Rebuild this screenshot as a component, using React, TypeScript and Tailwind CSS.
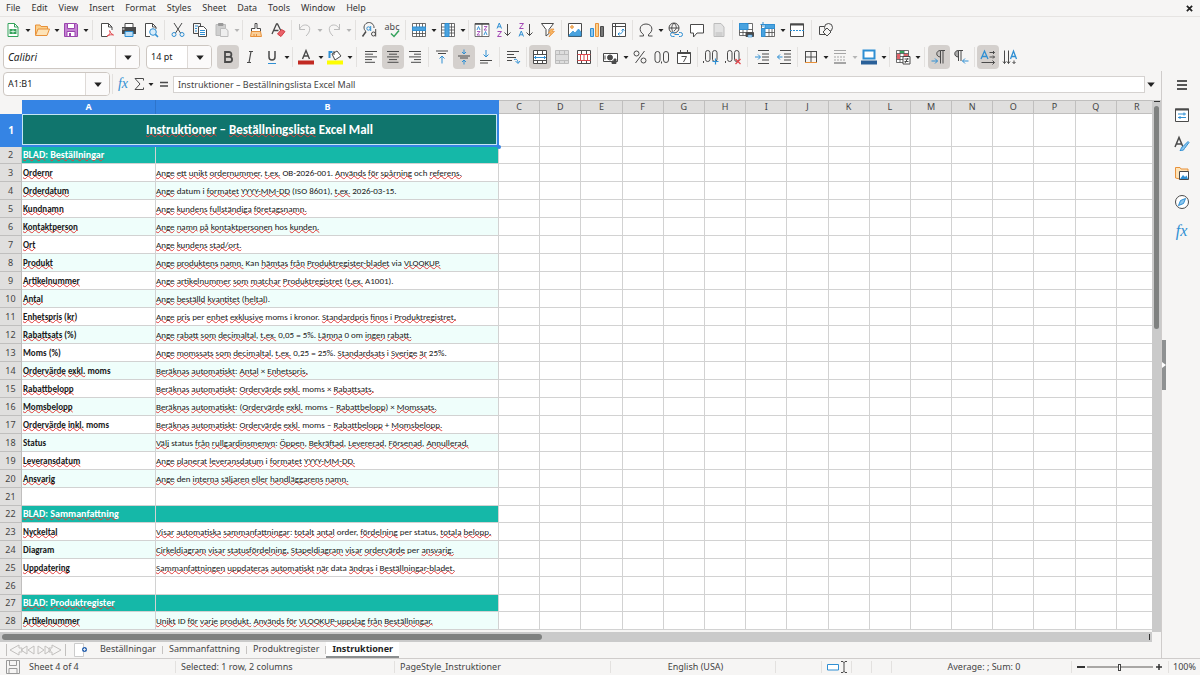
import { ReactNode, useState } from "react";
import clsx from "clsx";

const INK = "#4a4a4a";
const BLUE = "#2f8fd3";
const ORANGE = "#e8913a";
const GREEN = "#35a35c";
const PALE = "#bcbcbc";

function Svg({ children, className }: { children: ReactNode; className?: string }) {
  return (
    <svg viewBox="0 0 16 16" className={clsx("size-4 shrink-0 overflow-visible", className)} fill="none" stroke={INK} aria-hidden="true">
      {children}
    </svg>
  );
}

const alignLines = (widths: number[], anchor: "l" | "c" | "r") =>
  widths.map((w, i) => {
    const x = anchor === "l" ? 2 : anchor === "r" ? 14 - w : 8 - w / 2;
    return <path key={i} d={`M${x} ${2.5 + i * 2.7}h${w}`} />;
  });

const icons: Record<string, ReactNode> = {
  new: (
    <>
      <path d="M3 1.5h6.5L13 5v9.5H3z" stroke={GREEN} fill="#fff" />
      <path d="M9.5 1.5V5H13" stroke={GREEN} />
      <path d="M4.5 7h7v5h-7z" stroke="none" fill={GREEN} />
      <path d="M5.5 9.5h5M8 7.5v4" stroke="#fff" strokeWidth=".7" />
    </>
  ),
  open: (
    <>
      <path d="M1.5 13V3h4.5l1 1.5h6.5V7" stroke={ORANGE} fill="#fbd08c" />
      <path d="M1.5 13.5L4 7h11.5L13 13.5z" stroke={ORANGE} fill="#fde3b8" />
    </>
  ),
  save: (
    <>
      <path d="M1.5 1.5h12l1 1v12h-13z" stroke="#9a45ad" fill="#c583d3" />
      <path d="M4.5 1.5h7v5h-7z" stroke="#9a45ad" fill="#fff" />
      <path d="M4 9.5h8v5H4z" stroke="#9a45ad" fill="#fff" />
      <path d="M6 11h2v3H6z" stroke="none" fill="#9a45ad" />
    </>
  ),
  pdf: (
    <>
      <path d="M13 8V5L9.5 1.5h-7v13H8" fill="#fff" />
      <path d="M9.5 1.5V5H13" />
      <path d="M8 14.5c3-2 3.5-4 3-5.5s-1.5 1 3.5 4c-2-.5-4-.3-6.5 1" stroke="#e0444a" />
    </>
  ),
  print: (
    <>
      <path d="M4 5V1.5h8V5" fill="#fff" />
      <path d="M1 5h14v7H1z" fill={INK} stroke="none" />
      <path d="M1.5 7h2" stroke="#fff" />
      <path d="M4 9.5h8v5H4z" fill="#bfe0f7" stroke={BLUE} />
    </>
  ),
  preview: (
    <>
      <path d="M7 14.5H2.5v-13h7L13 5v2" fill="#fff" />
      <path d="M9.5 1.5V5H13" />
      <circle cx="10" cy="10" r="3.3" stroke={BLUE} fill="#d9edfa" />
      <path d="M12.4 12.4L15 15" stroke={BLUE} strokeWidth="1.5" />
    </>
  ),
  cut: (
    <>
      <path d="M4 1l6.5 10M12 1L5.5 11" />
      <circle cx="4" cy="12.5" r="2" stroke={BLUE} />
      <circle cx="12" cy="12.5" r="2" stroke={BLUE} />
    </>
  ),
  copy: (
    <>
      <path d="M1.5 1.5h7V4M6 11.5H1.5v-10" />
      <path d="M3 4h3M3 6.5h2M3 9h2" stroke={BLUE} />
      <path d="M6.5 4.5h5l3 3v7h-8z" fill="#fff" />
      <path d="M8 8.5h5M8 10.5h5M8 12.5h5" stroke={BLUE} />
    </>
  ),
  paste: (
    <>
      <path d="M2 2.5h9.5v11H2z" fill="#cfcfcf" stroke={PALE} />
      <path d="M4.5 1.5H9v2H4.5z" fill="#999" stroke="#999" />
      <path d="M6.5 6.5h5l2.5 2v6H6.5z" fill="#eee" stroke={PALE} />
    </>
  ),
  clone: (
    <>
      <path d="M7 1.5h2v5h3.5v3h-9v-3H7z" fill="#fff" />
      <path d="M3.5 9.5h9l1 5h-11z" fill="#f9cf9a" stroke={ORANGE} />
      <path d="M6 14v-2M8.5 14v-2" stroke={ORANGE} />
    </>
  ),
  clear: (
    <>
      <path d="M2 12L6.5 2h1L11 9M3.5 8.5h5" strokeWidth="1.3" />
      <path d="M7.5 12l4-4.5L15 9.5l-4 5z" fill="#e9636a" stroke="#d33b43" />
    </>
  ),
  undo: <path d="M2.5 2v5.5H8M2.5 7.5C4 4 6 3 8.5 3c5 0 6 6 .5 11" stroke={PALE} />,
  redo: <path d="M13.5 2v5.5H8M13.5 7.5C12 4 10 3 7.5 3c-5 0-6 6-.5 11" stroke={PALE} />,
  find: (
    <>
      <path d="M4 9.5A5 5 0 1 1 12 6" />
      <path d="M4 9.5L.5 14.5" strokeWidth="1.5" />
      <circle cx="6.5" cy="6.5" r="1.7" stroke={BLUE} />
      <path d="M8.7 4v5" stroke={BLUE} />
      <circle cx="11.5" cy="12" r="2" />
      <path d="M13.7 7v7.5" />
    </>
  ),
  spelling: (
    <>
      <text x="8" y="8" textAnchor="middle" fontSize="9" fill={INK} stroke="none">
        abc
      </text>
      <path d="M7 11.5l3 3 5-6" stroke={GREEN} strokeWidth="1.5" />
    </>
  ),
  rowOp: (
    <>
      <path d="M1.5 1.5h13v13h-13zM1.5 11.5h13M5.5 1.5v13M8.500 1.5v13M11.5 1.5v13" fill="#fff" strokeWidth=".8" />
      <path d="M1.5 5h13v3.5h-13z" fill="#4aa3df" stroke={BLUE} />
    </>
  ),
  colOp: (
    <>
      <path d="M1.5 1.5h13v13h-13zM1.5 5h13M1.5 8h13M1.5 11h13M11.5 1.5v13" fill="#fff" strokeWidth=".8" />
      <path d="M5 1.5h4v13H5z" fill="#4aa3df" stroke={BLUE} />
    </>
  ),
  sort: (
    <>
      <path d="M1 1.5h14v13H1zM8 1.5v13" fill="#fff" strokeWidth=".8" />
      <path d="M1 2h14" strokeWidth="1.5" />
      <path d="M3 8l1.5-3.5L6 8M10 13l1.5-3.5L13 13" stroke={BLUE} strokeWidth=".9" />
      <path d="M3 9.5h3L3 13h3M10 4.500h3L10 8h3" stroke="#a348b5" strokeWidth=".9" />
    </>
  ),
  sortAsc: (
    <>
      <path d="M1 6.5L3.3 1l2.2 5.5M1.8 4.8h3" stroke={BLUE} />
      <path d="M1.5 9.5h4l-4 5h4" stroke="#a348b5" />
      <path d="M11.5 2v11.5M8.5 10.5l3 3 3-3" />
    </>
  ),
  sortDesc: (
    <>
      <path d="M1.5 1.5h4l-4 5h4" stroke="#a348b5" />
      <path d="M1 14.5L3.3 9l2.2 5.5M1.8 12.8h3" stroke={BLUE} />
      <path d="M11.5 2v11.5M8.5 10.5l3 3 3-3" />
    </>
  ),
  filter: (
    <>
      <path d="M1.5 1.5h12l-4.5 6v4l-3 2.5V7.5z" fill="#fff" />
      <path d="M11 7l-2.5 4H11L9 15l5.5-5.5H12L14 7z" fill="#f7b665" stroke={ORANGE} strokeWidth=".7" />
    </>
  ),
  image: (
    <>
      <path d="M1.5 1.5h13v13h-13z" fill="#fff" />
      <circle cx="5" cy="5" r="1.3" stroke={ORANGE} fill="#fbd08c" />
      <path d="M2 13l4-4 2 2 3.5-4L14 10v4H2z" fill="#4aa3df" stroke={BLUE} strokeWidth=".7" />
    </>
  ),
  chart: (
    <>
      <path d="M1.5 6.5h3v8h-3z" fill="#8cc6ee" stroke={BLUE} />
      <path d="M6.5 1.5h3v13h-3z" fill="#fbd08c" stroke={ORANGE} />
      <path d="M11.5 4.5h3v10h-3z" fill="#777" />
    </>
  ),
  pivot: (
    <>
      <path d="M1.5 1.5h13v13h-13zM1.5 4.5h13M4.5 1.5v13" fill="#fff" />
      <path d="M7 12c4 0 5-2 5-5M10.5 8.5L12 7l1.5 1.5M8.5 10.5L7 12l1.5 1.5" stroke={BLUE} />
    </>
  ),
  omega: <path d="M1.5 14h4v-1.5C0 9 1.5 2 8 2s8 7 2.5 10.500V14h4" />,
  link: (
    <>
      <circle cx="7" cy="6" r="5" />
      <path d="M2 6h10M7 1c-3 3-3 7 0 10M7 1c3 3 3 6 0 8" />
      <path d="M7.5 10.5h-2a2 2 0 000 4h2M12 10.5h1.5a2 2 0 010 4H12M7.5 12.5H12" stroke={BLUE} />
    </>
  ),
  comment: <path d="M1.5 2.5h13V11H8l-3.500 4v-4h-3z" fill="#fff" />,
  header: (
    <>
      <path d="M3 1.5h7L13 5v9.5H3z" fill="#e2e2e2" stroke={PALE} />
      <path d="M4.5 11h7M4.5 13h7" stroke={PALE} />
    </>
  ),
  printRange: (
    <>
      <path d="M1.5 1.5h13v12h-13zM1.5 7.5h13M1.5 10.5h13M5 1.5v12M9 1.5v12" fill="#fff" strokeWidth=".8" />
      <path d="M1.5 1.5H10v6H1.5z" fill="#4aa3df" stroke={BLUE} />
      <path d="M8 10.5h7.5v4H8z" fill={INK} />
      <path d="M10 13h4v2h-4z" fill="#bfe0f7" stroke={BLUE} strokeWidth=".6" />
    </>
  ),
  freeze: (
    <>
      <path d="M1.5 2.5h13v12h-13zM1.5 10.5h13M9 2.5v12M12 2.5v12" fill="#fff" strokeWidth=".8" />
      <path d="M1.5 6.5v8H5v-8h9.5v-4H5v4z" fill="#4aa3df" stroke={BLUE} />
      <path d="M3 0v5M.5 2.5h5" stroke={BLUE} />
    </>
  ),
  split: (
    <>
      <path d="M1.5 2h13v12.5h-13z" fill="#fff" />
      <path d="M1 2.5h14" strokeWidth="2" />
      <path d="M1 8.5h14" stroke={BLUE} strokeDasharray="2 1" />
    </>
  ),
  shapes: (
    <>
      <path d="M1.5 4.5h7v8h-7z" fill="#f6f5f4" />
      <circle cx="10.5" cy="5.5" r="4" fill="#f6f5f4" />
      <path d="M9 6l4 4-4 4-4-4z" fill="#f6f5f4" />
    </>
  ),
  bold: <path d="M5 3h4a2.3 2.3 0 010 4.8H5zM5 7.8h4.5a2.6 2.6 0 010 5.2H5z" strokeWidth="1.8" />,
  italic: <path d="M7 2.5h4M5 13.5h4M9 2.5l-2 11" strokeWidth="1.2" />,
  underline: (
    <>
      <path d="M5 2v6c0 4 6 4 6 0V2" strokeWidth="1.5" />
      <path d="M4 14.5h8" stroke={BLUE} />
    </>
  ),
  fontColor: (
    <>
      <path d="M4.5 10L8 1.5l3.5 8.500M5.5 7h5" strokeWidth="1.4" />
      <path d="M0 11.5h16v4H0z" fill="#c22a22" stroke="none" />
    </>
  ),
  highlight: (
    <>
      <path d="M5 5l5-3 4 5-6 4z" fill="#fff" />
      <path d="M2.5 9V3h3" stroke={BLUE} strokeWidth="2" />
      <path d="M7 2v4" />
      <path d="M0 11.5h16v4H0z" fill="#fdfd00" stroke="none" />
    </>
  ),
  left: alignLines([12, 8, 12, 7, 10], "l"),
  center: alignLines([12, 8, 12, 8, 11], "c"),
  right: alignLines([12, 7, 12, 7, 10], "r"),
  top: (
    <>
      <path d="M2 2h12M4 4.5h8" />
      <path d="M8 14.5V7M5.5 9.5L8 7l2.5 2.5" stroke={BLUE} />
    </>
  ),
  middle: (
    <>
      <path d="M2 7h12M4 9h8" />
      <path d="M8 .5V5M6 3l2 2 2-2M8 15.5V11M6 13l2-2 2 2" stroke={BLUE} />
    </>
  ),
  bottom: (
    <>
      <path d="M2 14h8M2 11.5h12" />
      <path d="M8 1v7M5.5 5.5L8 8l2.5-2.5" stroke={BLUE} />
    </>
  ),
  wrap: (
    <>
      <path d="M2 2.5h12M2 5.5h7M2 8.5h9M2 11.5h5" />
      <path d="M9 10.5c3-1 4 1 4 3.5M10.5 12l2.5 2.5 2-2.500" stroke={BLUE} />
    </>
  ),
  merge: (
    <>
      <path d="M1.5 1.5h13v13h-13zM1.5 5.5h13M1.5 11.5h13M5.5 1.5v4M10.5 1.5v4M5.5 11.5v3M10.5 11.5v3" fill="#fff" />
      <path d="M2 8.5h12M4 7L2.5 8.5 4 10M12 7l1.5 1.5L12 10" stroke={BLUE} />
    </>
  ),
  mergeCells: (
    <path d="M1.5 1.5h13v13h-13zM1.5 5.5h13M1.5 11.5h13M5.5 1.5v4M10.5 1.5v4M5.5 11.5v3M10.5 11.5v3" stroke={PALE} fill="#ddd" />
  ),
  unmerge: (
    <>
      <path d="M1.5 1.5h13v13h-13zM5.5 1.5v4M10.5 1.5v4M5.5 11.5v3M10.5 11.5v3" fill="#fff" />
      <path d="M1.5 5.5h13M1.5 11.5h13M4.5 5.5v6M8 5.5v6M11.5 5.5v6" stroke="#d8484e" />
    </>
  ),
  currency: (
    <>
      <path d="M.5 4.5h14v8H.5zM2 6.5v4" fill="#fff" />
      <circle cx="7" cy="8.5" r="2.5" fill={INK} />
      <path d="M9 14.5V12h2v-2h2v4.5z" fill={INK} />
    </>
  ),
  percent: (
    <>
      <circle cx="4.5" cy="4.5" r="2.5" />
      <circle cx="11.5" cy="11.5" r="2.5" />
      <path d="M12.5 2l-9 12" />
    </>
  ),
  number: (
    <>
      <rect x="1" y="2.5" width="5" height="11" rx="2.5" />
      <rect x="9.5" y="2.5" width="5" height="11" rx="2.5" />
      <path d="M7.5 12.5v2" />
    </>
  ),
  date: (
    <>
      <path d="M1.5 3.5h13v11h-13z" fill="#fff" />
      <path d="M1.5 4h13" strokeWidth="2" />
      <path d="M4.5 1v2M11.5 1v2M5.5 7.500h5l-3 5.5" />
    </>
  ),
  addDec: (
    <>
      <rect x="2.5" y="1.5" width="4.5" height="11" rx="2.2" />
      <rect x="9.5" y="1.5" width="4.5" height="11" rx="2.2" />
      <path d="M.5 12v2" />
      <path d="M12.5 9.5v6M9.5 12.5h6" stroke={BLUE} strokeWidth="1.2" />
    </>
  ),
  delDec: (
    <>
      <rect x="2.5" y="1.5" width="4.5" height="11" rx="2.2" />
      <rect x="9.5" y="1.5" width="4.5" height="11" rx="2.2" />
      <path d="M.5 12v2" />
      <path d="M10.5 10l5 5M15.5 10l-5 5" stroke="#e0444a" strokeWidth="1.2" />
    </>
  ),
  indent: (
    <>
      <path d="M4 1.5h11M8 5h7M8 8h7M8 11h7M4 14.5h11" />
      <path d="M1 8h5M4 5.5L6.5 8 4 10.5" stroke={BLUE} />
    </>
  ),
  outdent: (
    <>
      <path d="M4 1.5h11M8 5h7M8 8h7M8 11h7M4 14.5h11" />
      <path d="M6.5 8h-5M4 5.5L1.5 8 4 10.5" stroke={BLUE} />
    </>
  ),
  borders: (
    <>
      <path d="M2.5 2v12M8 2v12M13.5 2v12M2 2.5h12M2 8h12" />
      <path d="M2 13.5h12" stroke={ORANGE} />
    </>
  ),
  borderStyle: (
    <>
      <path d="M2 1.5h12M2 4.5h12" stroke="#a5a5a5" />
      <path d="M2 8h12M2 11h12" stroke="#a5a5a5" strokeDasharray="2 1" />
      <path d="M2 14h12" stroke="#a5a5a5" strokeWidth="2" />
    </>
  ),
  borderColor: (
    <>
      <path d="M2.5 1.5h11v8h-11z" stroke={BLUE} strokeWidth="2" fill="#fff" />
      <path d="M0 11.5h16v4H0z" fill="#2a6099" stroke="none" />
    </>
  ),
  conditional: (
    <>
      <path d="M1.5 1.5h12v12h-12zM1.5 4.5h12M1.5 7.5h12M1.5 10.5h12M5 1.5v12M9 1.5v12" fill="#fff" strokeWidth=".8" />
      <path d="M5 2h4v2H5z" fill={GREEN} stroke="none" />
      <path d="M2 5h3v5H2zM9 5h4v2H9z" fill="#e0636a" stroke="none" />
      <path d="M8 7.5h7V15H8z" fill="#fff" />
      <path d="M9.5 10h4M9.5 12.5h4M10 14l3-5" />
    </>
  ),
  ltr: (
    <>
      <path d="M9.5 8c-5 0-5-6.500 0-6.5" fill="#c4c1bf" />
      <path d="M9.5 14.5v-13H14M12 1.5v13" />
      <path d="M.5 12h6M4 9.5L6.5 12 4 14.5" stroke={BLUE} />
    </>
  ),
  rtl: (
    <>
      <path d="M5.5 8c-5 0-5-6.500 0-6.5" fill="#aaa" />
      <path d="M5.5 12V1.5H10M8 1.5V12" />
      <path d="M15.5 12h-6M12 9.5L9.5 12l2.5 2.5" stroke={BLUE} />
    </>
  ),
  textLtr: (
    <>
      <path d="M1 10l3.5-8L8 10M2.5 7.5h4" stroke={BLUE} strokeWidth="1.3" />
      <path d="M9.5 3.5h5M13 2l1.5 1.5L13 5M9.5 8h5M13 6.5L14.5 8 13 9.5M1.5 13.5h13M12.5 11.5l2 2-2 2" />
    </>
  ),
  textTtb: (
    <>
      <path d="M8.5 10l3-8 3 8M9.5 7.5h4" stroke={BLUE} strokeWidth="1.3" />
      <path d="M2.5 1.5v13M1 12.5l1.5 2 1.5-2M6.5 1.5v13M5 12.5l1.5 2 1.5-2M12 11.5v3M10.5 13l1.5 1.5 1.5-1.5" />
    </>
  ),
};

function Caret({ pale, large }: { pale?: boolean; large?: boolean }) {
  return (
    <svg viewBox="0 0 8 8" className={clsx("shrink-0", large ? "size-3" : "size-2")} aria-hidden="true">
      <path d="M1.5 3h5L4 6z" fill={pale ? "#b5b5b5" : "#222"} />
    </svg>
  );
}

type Tool = { icon: string; label: string; menu?: boolean; active?: boolean; disabled?: boolean };
type ToolItem = Tool | "|" | "||";

function ToolButton({ tool }: { tool: Tool }) {
  return (
    <div className="flex shrink-0 items-center">
      <button
        type="button"
        aria-label={tool.label}
        title={tool.label}
        disabled={tool.disabled}
        className={clsx("flex h-6 w-[22px] items-center justify-center rounded-sm", tool.active && "bg-[#d4d0cd]")}
      >
        <Svg>{icons[tool.icon]}</Svg>
      </button>
      {tool.menu && (
        <button type="button" aria-label={`${tool.label} options`} className="flex h-6 w-[7px] items-center justify-center">
          <Caret pale={tool.disabled} />
        </button>
      )}
    </div>
  );
}

function ToolRow({ items }: { items: ToolItem[] }) {
  return (
    <>
      {items.map((item, i) =>
        typeof item === "string" ? (
          <div key={i} className={clsx("flex shrink-0 justify-center", item === "|" ? "w-[5px]" : "w-[7px]")}>
            <div className="h-5 w-px bg-[#e3e1df]" />
          </div>
        ) : (
          <ToolButton key={i} tool={item} />
        ),
      )}
    </>
  );
}

const standardTools: ToolItem[] = [
  { icon: "new", label: "New", menu: true },
  { icon: "open", label: "Open", menu: true },
  { icon: "save", label: "Save", menu: true },
  "||",
  { icon: "pdf", label: "Export as PDF" },
  { icon: "print", label: "Print" },
  { icon: "preview", label: "Print Preview" },
  "|",
  { icon: "cut", label: "Cut" },
  { icon: "copy", label: "Copy" },
  { icon: "paste", label: "Paste", menu: true, disabled: true },
  "|",
  { icon: "clone", label: "Clone Formatting" },
  { icon: "clear", label: "Clear Direct Formatting" },
  "|",
  { icon: "undo", label: "Undo", menu: true, disabled: true },
  { icon: "redo", label: "Redo", menu: true, disabled: true },
  "||",
  { icon: "find", label: "Find and Replace" },
  { icon: "spelling", label: "Spelling" },
  "|",
  { icon: "rowOp", label: "Row", menu: true },
  { icon: "colOp", label: "Column", menu: true },
  "|",
  { icon: "sort", label: "Sort" },
  { icon: "sortAsc", label: "Sort Ascending" },
  { icon: "sortDesc", label: "Sort Descending" },
  { icon: "filter", label: "AutoFilter" },
  "|",
  { icon: "image", label: "Insert Image" },
  { icon: "chart", label: "Insert Chart" },
  { icon: "pivot", label: "Insert Pivot Table" },
  "|",
  { icon: "omega", label: "Special Character", menu: true },
  { icon: "link", label: "Insert Hyperlink" },
  { icon: "comment", label: "Insert Comment" },
  { icon: "header", label: "Headers and Footers", disabled: true },
  "|",
  { icon: "printRange", label: "Define Print Area" },
  { icon: "freeze", label: "Freeze Rows and Columns", menu: true },
  { icon: "split", label: "Split Window" },
  "||",
  { icon: "shapes", label: "Show Draw Functions" },
];

const formatTools: ToolItem[] = [
  { icon: "bold", label: "Bold", active: true },
  { icon: "italic", label: "Italic" },
  { icon: "underline", label: "Underline", menu: true },
  "|",
  { icon: "fontColor", label: "Font Color", menu: true },
  { icon: "highlight", label: "Background Color", menu: true },
  "||",
  { icon: "left", label: "Align Left" },
  { icon: "center", label: "Align Center", active: true },
  { icon: "right", label: "Align Right" },
  "|",
  { icon: "top", label: "Align Top" },
  { icon: "middle", label: "Center Vertically", active: true },
  { icon: "bottom", label: "Align Bottom" },
  "|",
  { icon: "wrap", label: "Wrap Text" },
  "|",
  { icon: "merge", label: "Merge and Center Cells", active: true },
  { icon: "mergeCells", label: "Merge Cells", disabled: true },
  { icon: "unmerge", label: "Unmerge Cells" },
  "|",
  { icon: "currency", label: "Format as Currency", menu: true },
  { icon: "percent", label: "Format as Percent" },
  { icon: "number", label: "Format as Number" },
  { icon: "date", label: "Format as Date" },
  "|",
  { icon: "addDec", label: "Add Decimal Place" },
  { icon: "delDec", label: "Delete Decimal Place" },
  "||",
  { icon: "indent", label: "Increase Indent" },
  { icon: "outdent", label: "Decrease Indent" },
  "|",
  { icon: "borders", label: "Borders", menu: true },
  { icon: "borderStyle", label: "Border Style", menu: true, disabled: true },
  { icon: "borderColor", label: "Border Color", menu: true },
  "|",
  { icon: "conditional", label: "Conditional Formatting", menu: true },
  "||",
  { icon: "ltr", label: "Left-To-Right", active: true },
  { icon: "rtl", label: "Right-To-Left" },
  "|",
  { icon: "textLtr", label: "Text direction from left to right", active: true },
  { icon: "textTtb", label: "Text direction from top to bottom" },
];

const menus = ["File", "Edit", "View", "Insert", "Format", "Styles", "Sheet", "Data", "Tools", "Window", "Help"];

const columns = ["C", "D", "E", "F", "G", "H", "I", "J", "K", "L", "M", "N", "O", "P", "Q", "R"];

const rows: [string, string][] = [
  ["BLAD: Beställningar", ""],
  ["Ordernr", "Ange ett unikt ordernummer, t.ex. OB-2026-001. Används för spårning och referens."],
  ["Orderdatum", "Ange datum i formatet YYYY-MM-DD (ISO 8601), t.ex. 2026-03-15."],
  ["Kundnamn", "Ange kundens fullständiga företagsnamn."],
  ["Kontaktperson", "Ange namn på kontaktpersonen hos kunden."],
  ["Ort", "Ange kundens stad/ort."],
  ["Produkt", "Ange produktens namn. Kan hämtas från Produktregister-bladet via VLOOKUP."],
  ["Artikelnummer", "Ange artikelnummer som matchar Produktregistret (t.ex. A1001)."],
  ["Antal", "Ange beställd kvantitet (heltal)."],
  ["Enhetspris (kr)", "Ange pris per enhet exklusive moms i kronor. Standardpris finns i Produktregistret."],
  ["Rabattsats (%)", "Ange rabatt som decimaltal, t.ex. 0,05 = 5%. Lämna 0 om ingen rabatt."],
  ["Moms (%)", "Ange momssats som decimaltal, t.ex. 0,25 = 25%. Standardsats i Sverige är 25%."],
  ["Ordervärde exkl. moms", "Beräknas automatiskt: Antal × Enhetspris."],
  ["Rabattbelopp", "Beräknas automatiskt: Ordervärde exkl. moms × Rabattsats."],
  ["Momsbelopp", "Beräknas automatiskt: (Ordervärde exkl. moms – Rabattbelopp) × Momssats."],
  ["Ordervärde inkl. moms", "Beräknas automatiskt: Ordervärde exkl. moms – Rabattbelopp + Momsbelopp."],
  ["Status", "Välj status från rullgardinsmenyn: Öppen, Bekräftad, Levererad, Försenad, Annullerad."],
  ["Leveransdatum", "Ange planerat leveransdatum i formatet YYYY-MM-DD."],
  ["Ansvarig", "Ange den interna säljaren eller handläggarens namn."],
  ["", ""],
  ["BLAD: Sammanfattning", ""],
  ["Nyckeltal", "Visar automatiska sammanfattningar: totalt antal order, fördelning per status, totala belopp."],
  ["Diagram", "Cirkeldiagram visar statusfördelning. Stapeldiagram visar ordervärde per ansvarig."],
  ["Uppdatering", "Sammanfattningen uppdateras automatiskt när data ändras i Beställningar-bladet."],
  ["", ""],
  ["BLAD: Produktregister", ""],
  ["Artikelnummer", "Unikt ID för varje produkt. Används för VLOOKUP-uppslag från Beställningar."],
];

// words the English dictionary accepts
const known = new Set(["datum", "i", "iso", "hos", "kan", "via", "per", "moms", "kronor", "om", "status", "den", "order", "data", "id", "och", "diagram", "excel", "mall"]);

function Spelled({ text }: { text: string }) {
  return (
    <>
      {text.split(/([\s(),:]+)/).map((part, i) => {
        const word = part.replace(/[.%]+$/, "").toLowerCase();
        const ok = !/[a-zåäö]/.test(word) || /\d/.test(word) || known.has(word);
        return ok ? (
          part
        ) : (
          <span key={i} className="underline decoration-[#e03b3b] decoration-wavy decoration-1 [text-decoration-skip-ink:none] [text-underline-offset:-1px]">
            {part}
          </span>
        );
      })}
    </>
  );
}

function Sheet() {
  return (
    // the last column runs on under the scroll bar
    <table className="w-[calc(100%+6px)] table-fixed border-separate border-spacing-0 bg-white">
      <colgroup>
        <col className="w-[22px]" />
        <col className="w-[134px]" />
        <col className="w-[343px]" />
        {columns.map((c) => (
          <col key={c} />
        ))}
      </colgroup>
      <thead>
        <tr className="h-[14px] text-[9px] leading-3 text-[#444]">
          <td className="bg-[#f6f5f4] p-0" />
          <th className="border-r border-[#2d74cb] bg-[#3584e4] p-0 font-bold text-white">A</th>
          <th className="bg-[#3584e4] p-0 font-bold text-white">B</th>
          {columns.map((c) => (
            <th key={c} className="border-t border-r border-b border-[#c0bfbe] bg-[#e0dfde] p-0 font-normal">
              {c}
            </th>
          ))}
        </tr>
      </thead>
      <tbody>
        <tr className="h-[33px]">
          <th className="bg-[#3584e4] p-0 text-[10px] font-bold text-white">1</th>
          <td colSpan={2} className="relative border-r-2 border-b-2 border-[#3584e4] bg-[#10756d] p-0 text-center font-['Carlito','Lato',sans-serif] text-[13px] leading-4 font-bold text-white">
            <Spelled text="Instruktioner – Beställningslista Excel Mall" />
            <span className="absolute inset-0 border border-[#c5e6f5]" />
            <span className="absolute -right-1 -bottom-1 z-10 size-1 rounded-full bg-[#3584e4]" />
          </td>
          {columns.map((c) => (
            <td key={c} className="border-r border-b border-[#d2d2d2] p-0" />
          ))}
        </tr>
        {rows.map(([name, text], i) => {
          const n = i + 2;
          const banner = name.startsWith("BLAD");
          const fill = banner ? "bg-[#15b8a8]" : n % 2 === 0 && name ? "bg-[#effefb]" : "bg-white";
          return (
            <tr key={n} className={banner ? "h-[17px]" : "h-[18px]"}>
              <th className="border-r border-b border-[#c0bfbe] bg-[#e0dfde] p-0 text-[9px] leading-3 font-normal text-[#444]">{n}</th>
              <td
                className={clsx(
                  "overflow-hidden border-r border-b border-[#d2d2d2] p-0 pl-px font-['Carlito','Lato',sans-serif] leading-4 font-bold whitespace-nowrap",
                  fill,
                  banner ? "text-[10px] text-white" : "text-[9px] text-[#1a1a1a]",
                )}
              >
                <Spelled text={name} />
              </td>
              <td
                className={clsx(
                  "overflow-hidden border-r border-b border-[#d2d2d2] p-0 font-['Carlito','Lato',sans-serif] text-[9px] leading-4 whitespace-nowrap text-[#1a1a1a]",
                  fill,
                )}
              >
                <Spelled text={text} />
              </td>
              {columns.map((c) => (
                <td key={c} className="border-r border-b border-[#d2d2d2] p-0" />
              ))}
            </tr>
          );
        })}
      </tbody>
    </table>
  );
}

function FormulaBar() {
  return (
    <div className="mb-[3px] flex h-[26px] shrink-0 items-center pr-1 pl-[3px]">
      <div className="flex h-6 w-[107px] shrink-0 overflow-hidden rounded border border-[#cdc7c2] bg-white">
        <input aria-label="Name Box" defaultValue="A1:B1" className="min-w-0 flex-1 px-1 text-[9px] text-[#222] outline-none" />
        <button type="button" aria-label="Name Box list" className="flex w-6 items-center justify-center border-l border-[#dedad7] bg-[#fbfafa]">
          <Caret large />
        </button>
      </div>
      <div className="mx-0.5 h-5 w-px bg-[#e3e1df]" />
      <button type="button" aria-label="Function Wizard" className="w-4 font-['Liberation_Serif',serif] text-[14px] leading-5 text-[#2f8fd3] italic">
        fx
      </button>
      <button type="button" aria-label="Select Function" className="flex w-4 items-center justify-center">
        <Svg>
          <path d="M12.5 4.5v-2H4L9 8l-5 5.5h8.5v-2" />
        </Svg>
      </button>
      <button type="button" aria-label="Functions" className="flex w-2 items-center justify-center">
        <Caret />
      </button>
      <button type="button" aria-label="Formula" className="flex w-[18px] items-center justify-center">
        <Svg>
          <path d="M4 6.5h8M4 10h8" strokeWidth="1.5" />
        </Svg>
      </button>
      <input
        aria-label="Input line"
        defaultValue="Instruktioner – Beställningslista Excel Mall"
        className="h-[17px] min-w-0 flex-1 border border-[#d5d2d0] bg-white px-1 text-[9px] text-[#444] outline-none"
      />
      <button type="button" aria-label="Expand Formula Bar" className="flex w-3 items-center justify-center">
        <Caret large />
      </button>
    </div>
  );
}

const panels = [
  {
    label: "Properties",
    art: (
      <>
        <path d="M1.5 2h13v12.5h-13z" fill="#fff" />
        <path d="M1 2.5h14" strokeWidth="2" />
        <path d="M4 7h8M10 5.5v3M4 10.5h8M6 9v3" stroke={BLUE} />
      </>
    ),
  },
  {
    label: "Styles",
    art: (
      <>
        <path d="M1 11l4-9.5L9 11M2.5 8h5" strokeWidth="1.5" />
        <path d="M6 14.5c2 0 4 0 4.5-2l4.5-6-1-1-5 5c-2 .5-1.5 2.5-3 4z" fill="#8cc6ee" stroke={BLUE} />
      </>
    ),
  },
  {
    label: "Gallery",
    art: (
      <>
        <path d="M1.5 13V2.5H6L7 4h7v4l-8 6z" stroke={ORANGE} fill="#fde3b8" />
        <path d="M5.5 6.5h9v8h-9z" fill="#fff" />
        <path d="M6 14l3-4 2 2 1.500-1.500L14 14z" fill={BLUE} stroke="none" />
      </>
    ),
  },
  {
    label: "Navigator",
    art: (
      <>
        <circle cx="8" cy="8" r="6.5" fill="#fff" />
        <path d="M11.5 4.5l-2 5-5 2 2-5z" fill="#8cc6ee" stroke={BLUE} />
      </>
    ),
  },
];

function Sidebar() {
  return (
    <aside className="flex w-[39px] shrink-0 items-center border-l border-[#cfcccb]">
      <button type="button" aria-label="Hide sidebar" className="flex h-[50px] w-1 items-center bg-[#8f9192]">
        <svg viewBox="0 0 4 6" className="h-[6px] w-1" aria-hidden="true">
          <path d="M0 0l4 3-4 3z" fill="#fff" />
        </svg>
      </button>
      <div className="flex flex-1 flex-col items-center self-start pt-1 pr-[3px]">
        <button type="button" aria-label="Sidebar Settings" className="mb-[5px] flex h-5 w-6 items-center justify-center">
          <Svg>
            <path d="M3 4h10M3 8h10M3 12h10" stroke="#222" strokeWidth="1.5" />
          </Svg>
        </button>
        {panels.map((panel) => (
          <button key={panel.label} type="button" aria-label={panel.label} className="flex h-[29px] w-6 items-center justify-center">
            <Svg>{panel.art}</Svg>
          </button>
        ))}
        <button type="button" aria-label="Functions" className="h-[29px] w-6 font-['Liberation_Serif',serif] text-[16px] leading-5 text-[#2f8fd3] italic">
          fx
        </button>
      </div>
    </aside>
  );
}

const sheets = ["Beställningar", "Sammanfattning", "Produktregister", "Instruktioner"];

function SheetTabs() {
  const [current, setCurrent] = useState("Instruktioner");
  return (
    <div className="flex h-4 shrink-0 items-stretch text-[9px] text-[#444]">
      <svg viewBox="0 0 62 16" className="ml-[5px] h-4 w-[62px]" fill="none" stroke="#c2c0be" aria-hidden="true">
        <path d="M1.5 2v12M14 3L5 8l9 5v-3h3V6h-3zM22 4v8l-6-4zM29 4v8l-6-4zM33 4v8l6-4zM40 4v8l6-4zM47 3l9 5-9 5v-3h-3V6h3zM60.5 2v12" />
      </svg>
      <button type="button" aria-label="Add Sheet" className="mr-[2px] ml-[7px] flex w-[18px] items-center">
        <Svg>
          <path d="M.5 1.5h9v13h-9z" stroke="#ccc" fill="#fff" />
          <circle cx="10.5" cy="7.5" r="2.5" fill="#2d65b0" stroke="none" />
          <path d="M10.5 6v3M9 7.5h3" stroke="#fff" strokeWidth=".7" />
        </Svg>
      </button>
      {sheets.map((s, i) => (
        <div key={s} className="flex items-center">
          {i > 0 && <div className="h-2 w-px bg-[#c6c3c1]" />}
          <button
            type="button"
            onClick={() => setCurrent(s)}
            className={clsx(
              "flex h-4 items-center border-b-2 px-[6px] leading-3",
              s === current ? "border-[#8b8e8f] bg-white font-bold text-[#222]" : "border-transparent",
            )}
          >
            {s}
          </button>
        </div>
      ))}
    </div>
  );
}

function StatusBar() {
  const cell = "flex h-3 items-center border-l border-[#e3e1df] pl-[5px]";
  return (
    <footer className="grid h-[17px] shrink-0 grid-cols-[175fr_219fr_216fr_165fr_46fr_30px_20px_20px_180fr_97px_32px] items-center border-t border-[#cfcccb] text-[9px] leading-3 whitespace-nowrap text-[#444]">
      <div className="flex items-center gap-2 pl-[5px]">
        <Svg className="size-3.5">
          <path d="M1.5 1.5h13v13h-13zM4.5 1.5v5h7v-5M4 14.5v-5h8v5" stroke="#999" />
        </Svg>
        Sheet 4 of 4
      </div>
      <div className={cell}>Selected: 1 row, 2 columns</div>
      <div className={cell}>PageStyle_Instruktioner</div>
      <div className={clsx(cell, "justify-center")}>English (USA)</div>
      <div className={cell} />
      <div className={cell}>
        <svg viewBox="0 0 22 12" className="h-3 w-[22px]" fill="none" aria-hidden="true">
          <path d="M.5 3.5h11V9H.5z" stroke={BLUE} fill="#fff" />
          <path d="M14 .5h2l1 1 1-1h2M17 1v10M14 11.5h2l1-1 1 1h2" stroke={INK} />
        </svg>
      </div>
      <div className={cell} />
      <div className={cell} />
      <div className={clsx(cell, "justify-center")}>Average: ; Sum: 0</div>
      <div className={clsx(cell, "gap-0.5")}>
        <button type="button" aria-label="Zoom Out" className="h-[2px] w-2 bg-[#333]" />
        <input
          type="range"
          aria-label="Zoom"
          min={0}
          max={100}
          defaultValue={49}
          className="h-[2px] w-[66px] appearance-none bg-[#a9a7a5] [&::-webkit-slider-thumb]:h-[7px] [&::-webkit-slider-thumb]:w-[3px] [&::-webkit-slider-thumb]:appearance-none [&::-webkit-slider-thumb]:border [&::-webkit-slider-thumb]:border-[#444] [&::-webkit-slider-thumb]:bg-white"
        />
        <button type="button" aria-label="Zoom In" className="w-2">
          <svg viewBox="0 0 8 8" className="size-2" stroke="#333" strokeWidth="1.5" aria-hidden="true">
            <path d="M1 4h6M4 1v6" />
          </svg>
        </button>
      </div>
      <div className="flex h-3 items-center border-l border-[#e3e1df] pl-1">100%</div>
    </footer>
  );
}

export default function App() {
  return (
    <div className="flex h-screen flex-col overflow-hidden bg-[#f6f5f4] font-['Noto_Sans',sans-serif] text-[#333]">
      <nav className="flex h-[17px] shrink-0 items-center gap-px border-b border-[#e6e4e2] pl-px text-[9px] leading-4">
        {menus.map((m) => (
          <button key={m} type="button" className="px-[5px]">
            {m}
          </button>
        ))}
        <button type="button" aria-label="Close document" className="ml-auto px-[7px]">
          <svg viewBox="0 0 8 8" className="size-[7px]" stroke="#222" strokeWidth="2" aria-hidden="true">
            <path d="M1 1l6 6M7 1L1 7" />
          </svg>
        </button>
      </nav>
      <div className="flex h-[26px] shrink-0 items-center pl-0.5">
        <ToolRow items={standardTools} />
      </div>
      <div className="flex h-7 shrink-0 items-center pl-[3px]">
        <div className="flex h-6 w-[137px] shrink-0 overflow-hidden rounded border border-[#cdc7c2] bg-white">
          <input aria-label="Font Name" defaultValue="Calibri" className="min-w-0 flex-1 px-1 text-[10px] text-[#222] italic outline-none" />
          <button type="button" aria-label="Font list" className="flex w-6 items-center justify-center border-l border-[#dedad7] bg-[#fbfafa]">
            <Caret large />
          </button>
        </div>
        <div className="mr-[5px] ml-[6px] flex h-6 w-[66px] shrink-0 overflow-hidden rounded border border-[#cdc7c2] bg-white">
          <input aria-label="Font Size" defaultValue="14 pt" className="min-w-0 flex-1 px-1 text-[9px] text-[#222] outline-none" />
          <button type="button" aria-label="Size list" className="flex w-6 items-center justify-center border-l border-[#dedad7] bg-[#fbfafa]">
            <Caret large />
          </button>
        </div>
        <ToolRow items={formatTools} />
      </div>
      <div className="flex min-h-0 flex-1">
        <div className="flex min-w-0 flex-1 flex-col">
          <FormulaBar />
          <div className="flex min-h-0 flex-1">
            <div className="min-w-0 flex-1 overflow-hidden">
              <Sheet />
            </div>
            <div className="flex w-[9px] flex-col items-center gap-1 bg-[#cacaca] pt-px">
              <div className="h-px w-[6px] bg-[#333]" />
              <div className="h-[42%] w-[5px] rounded-full bg-[#7f8180]" />
            </div>
          </div>
          <div className="mr-[9px] flex h-[10px] shrink-0 items-center justify-between bg-[#cacaca] px-0.5">
            <div className="h-[6px] w-[47%] rounded-full bg-[#7f8180]" />
            <div className="h-[6px] w-px bg-[#333]" />
          </div>
          <SheetTabs />
        </div>
        <Sidebar />
      </div>
      <StatusBar />
    </div>
  );
}
